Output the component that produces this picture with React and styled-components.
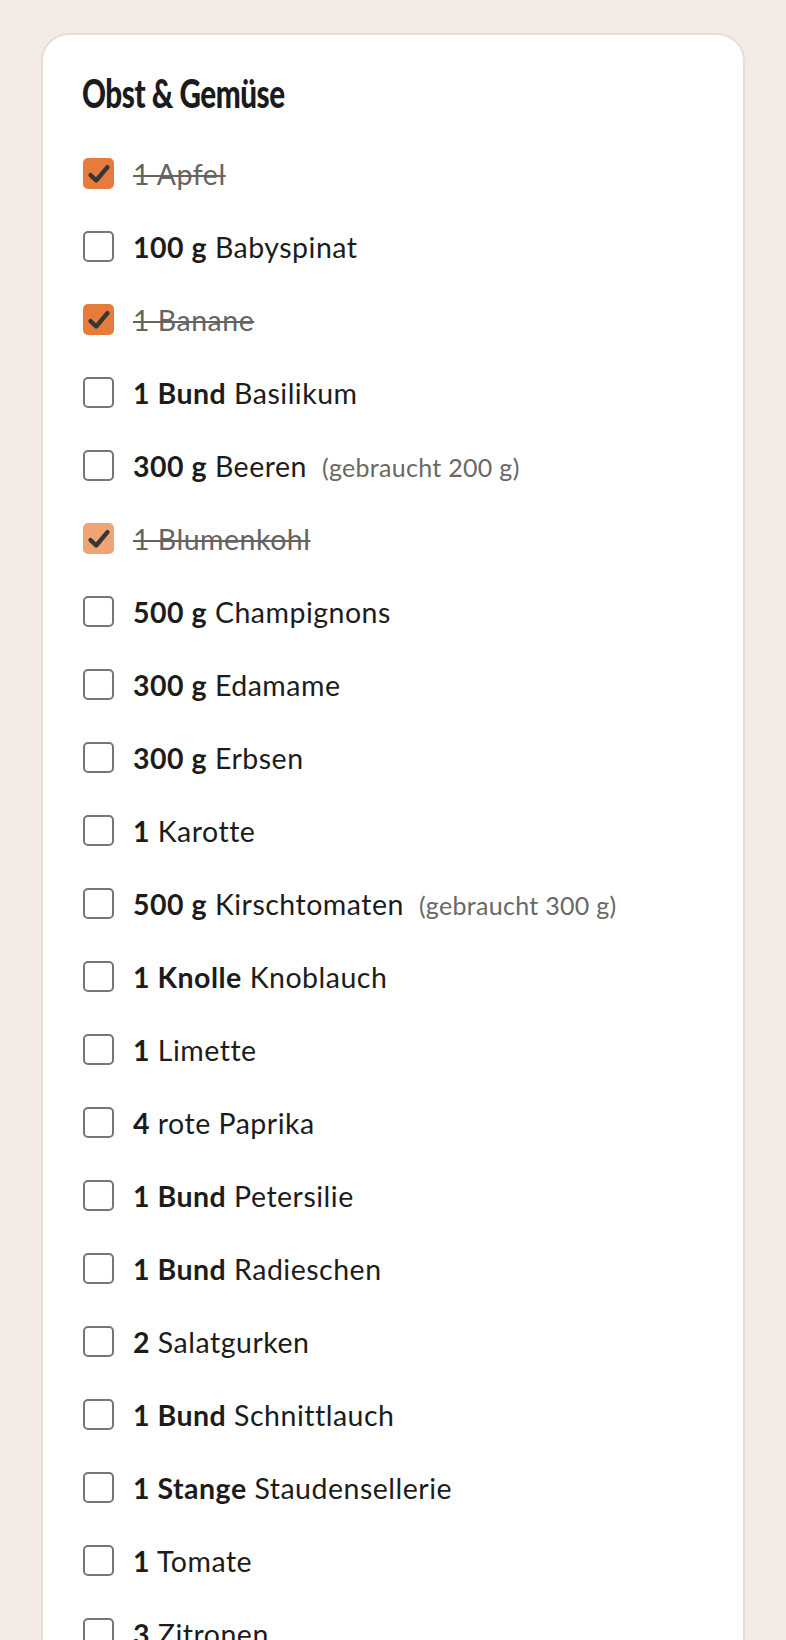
import React from "react";
import styled, { createGlobalStyle } from "styled-components";

const GlobalStyle = createGlobalStyle`
  html, body {
    margin: 0;
    padding: 0;
    background: #f3ece6;
  }
  body {
    font-family: Lato, "Noto Sans", sans-serif;
    color: #1c1c1c;
  }
`;

const Page = styled.div`
  padding: 33px 41px 0 41px;
  height: 1640px;
  overflow: hidden;
  box-sizing: border-box;
`;

const Card = styled.section`
  background: #ffffff;
  border: 2px solid #e7ded3;
  border-radius: 28px;
  padding: 36px 40px 40px 40px;
  min-height: 1700px;
  box-sizing: border-box;
`;

const Heading = styled.h2`
  margin: 0 0 22px -1px;
  font-family: Lato, "Liberation Sans", sans-serif;
  font-weight: 900;
  font-size: 40px;
  line-height: 44px;
  letter-spacing: -0.6px;
  color: #1b1b1b;
  display: inline-block;
  transform: scaleX(0.74);
  transform-origin: left center;
  white-space: nowrap;
`;

const List = styled.ul`
  list-style: none;
  margin: 0;
  padding: 0;
`;

const Row = styled.li`
  display: flex;
  align-items: center;
  height: 73px;
  gap: 19px;
`;

const Box = styled.span`
  flex: none;
  width: 31px;
  height: 31px;
  box-sizing: border-box;
  border-radius: 5px;
  display: flex;
  align-items: center;
  justify-content: center;
  border: ${(p) => (p.$checked ? "none" : "2px solid #767676")};
  background: ${(p) => (p.$checked ? (p.$soft ? "#eea475" : "#e77b3c") : "#ffffff")};
`;

const Line = styled.span`
  display: flex;
  align-items: baseline;
  white-space: nowrap;
`;

const Label = styled.span`
  font-size: 28.5px;
  line-height: 34px;
  letter-spacing: 0.5px;
  color: ${(p) => (p.$done ? "#666461" : "#1c1c1c")};
  text-decoration: ${(p) => (p.$done ? "line-through" : "none")};
  text-decoration-thickness: 2px;
`;

const Amount = styled.b`
  font-weight: 700;
`;

const Used = styled.span`
  margin-left: 15px;
  font-size: 25px;
  letter-spacing: 0.3px;
  color: #6a6865;
`;

const Check = () => (
  <svg width="26" height="26" viewBox="0 0 24 24" aria-hidden="true">
    <path
      d="M4.2 13 L9.4 18 L19.8 5.6"
      fill="none"
      stroke="#363636"
      strokeWidth="4"
      strokeLinecap="round"
      strokeLinejoin="round"
    />
  </svg>
);

const items = [
  { amount: "1", name: "Apfel", done: true },
  { amount: "100 g", name: "Babyspinat" },
  { amount: "1", name: "Banane", done: true },
  { amount: "1 Bund", name: "Basilikum" },
  { amount: "300 g", name: "Beeren", used: "(gebraucht 200 g)" },
  { amount: "1", name: "Blumenkohl", done: true, soft: true },
  { amount: "500 g", name: "Champignons" },
  { amount: "300 g", name: "Edamame" },
  { amount: "300 g", name: "Erbsen" },
  { amount: "1", name: "Karotte" },
  { amount: "500 g", name: "Kirschtomaten", used: "(gebraucht 300 g)" },
  { amount: "1 Knolle", name: "Knoblauch" },
  { amount: "1", name: "Limette" },
  { amount: "4", name: "rote Paprika" },
  { amount: "1 Bund", name: "Petersilie" },
  { amount: "1 Bund", name: "Radieschen" },
  { amount: "2", name: "Salatgurken" },
  { amount: "1 Bund", name: "Schnittlauch" },
  { amount: "1 Stange", name: "Staudensellerie" },
  { amount: "1", name: "Tomate" },
  { amount: "3", name: "Zitronen" },
];

export default function App() {
  return (
    <>
      <GlobalStyle />
      <Page>
        <Card>
          <Heading>Obst &amp; Gemüse</Heading>
          <List>
            {items.map((it) => (
              <Row key={it.name}>
                <Box $checked={it.done} $soft={it.soft}>
                  {it.done && <Check />}
                </Box>
                <Line>
                  <Label $done={it.done}>
                    {it.done ? (
                      `${it.amount} ${it.name}`
                    ) : (
                      <>
                        <Amount>{it.amount}</Amount> {it.name}
                      </>
                    )}
                  </Label>
                  {it.used && <Used>{it.used}</Used>}
                </Line>
              </Row>
            ))}
          </List>
        </Card>
      </Page>
    </>
  );
}
